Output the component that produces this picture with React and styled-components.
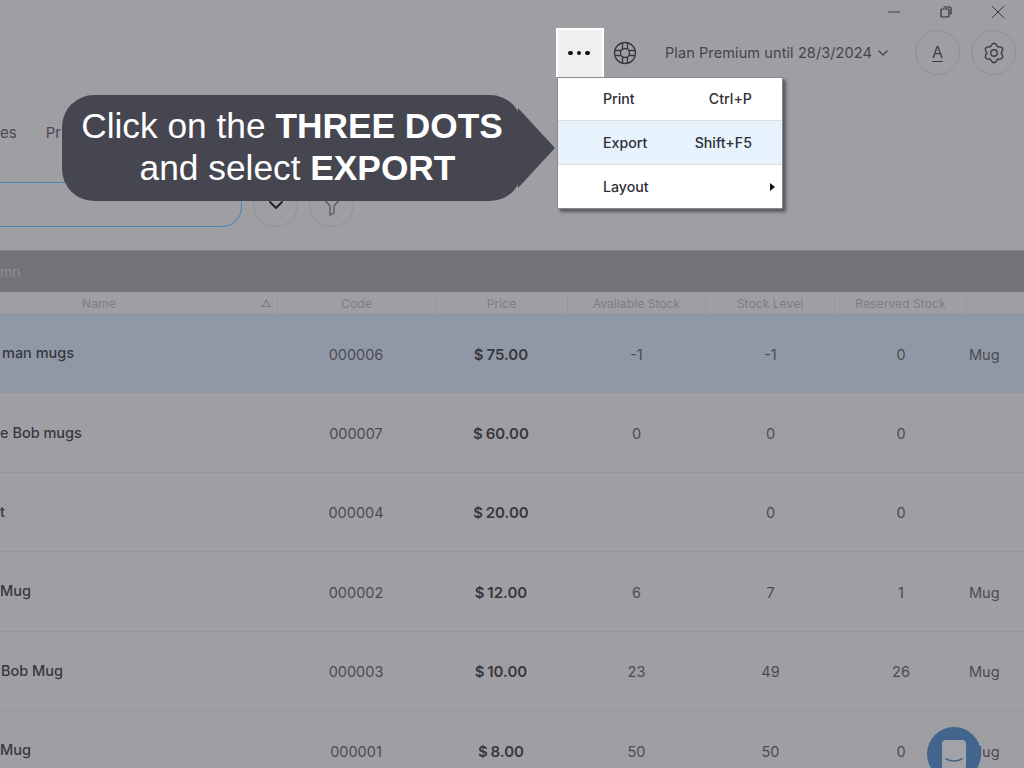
import React from "react";
import styled, { createGlobalStyle } from "styled-components";
import { ChevronDown, X, Minus } from "lucide-react";

const GlobalStyle = createGlobalStyle`
  html, body {
    margin: 0;
    height: 100%;
    overflow: hidden;
    background: #9f9ea3;
  }
  * {
    box-sizing: border-box;
  }
`;

const Page = styled.div`
  position: relative;
  width: 1024px;
  height: 768px;
  overflow: hidden;
  display: flex;
  flex-direction: column;
  background: #9f9ea3;
  color: #3f3e45;
  font-family: Inter, "Liberation Sans", sans-serif;
  font-size: 14px;
`;

const TitleBar = styled.div`
  height: 28px;
  flex: none;
  display: flex;
  justify-content: flex-end;
`;

const WindowButton = styled.div`
  width: 52px;
  height: 24px;
  display: flex;
  align-items: center;
  justify-content: center;
  color: #2f2e34;
`;

const Toolbar = styled.div`
  height: 49px;
  flex: none;
  display: flex;
  align-items: center;
  justify-content: flex-end;
  padding-right: 8px;
`;

const DotsWrap = styled.div`
  position: relative;
  width: 48px;
  height: 49px;
  margin-right: 9px;
`;

const DotsButton = styled.div`
  width: 48px;
  height: 49px;
  display: flex;
  align-items: center;
  justify-content: center;
  gap: 4px;
  padding-bottom: 1px;
  padding-right: 2px;
  background: #efefef;
  border: 2px solid #fff;
  border-bottom: 0;
`;

const Dot = styled.span`
  width: 4.5px;
  height: 4.5px;
  border-radius: 50%;
  background: #111;
`;

const Menu = styled.div`
  position: absolute;
  top: 49px;
  left: 1px;
  width: 226px;
  display: flex;
  flex-direction: column;
  background: #fff;
  border: 1px solid #8a898e;
  box-shadow: 3px 3px 3px rgba(40, 40, 48, 0.6);
  z-index: 3;
`;

const MenuItem = styled.div`
  height: ${(p) => (p.$first ? 42 : 44)}px;
  display: flex;
  align-items: center;
  justify-content: space-between;
  padding: 0 30px ${(p) => (p.$first ? 2 : 0)}px 45px;
  background: ${(p) => (p.$active ? "#e6f3fd" : "#fff")};
  border-top: ${(p) => (p.$first ? "0" : "1px solid #dddddd")};
  color: #2f2f36;
  font-size: 14.2px;
  font-weight: 500;
`;

const SubArrow = styled.span`
  width: 0;
  height: 0;
  margin-right: -23px;
  border-left: 5px solid #111;
  border-top: 4px solid transparent;
  border-bottom: 4px solid transparent;
`;

const HelpIcon = styled.div`
  width: 24px;
  height: 24px;
  margin-right: 28px;
  color: #38373d;
`;

const Plan = styled.div`
  display: flex;
  align-items: center;
  gap: 3px;
  margin-right: 24px;
  font-size: 14.5px;
  letter-spacing: 0.1px;
  color: #46454c;
`;

const CircleButton = styled.div`
  width: 45px;
  height: 45px;
  flex: none;
  display: flex;
  align-items: center;
  justify-content: center;
  border: 1px solid #918f95;
  border-radius: 50%;
  margin-left: ${(p) => p.$gap || 0}px;
  color: ${(p) => p.$color || "#3f3e45"};
`;

const LetterA = styled.span`
  font-size: 16px;
  font-weight: 400;
  line-height: 17px;
  border-bottom: 1.5px solid #3f3e45;
`;

const Tabs = styled.div`
  height: 105px;
  flex: none;
  display: flex;
  align-items: flex-start;
  gap: 29px;
  padding-top: 46px;
  font-size: 15px;
  color: #4a4950;
`;

const FilterRow = styled.div`
  height: 45px;
  flex: none;
  display: flex;
  gap: 11px;
`;

const SearchBox = styled.div`
  width: 242px;
  height: 45px;
  border: 1.5px solid #4b87b5;
  border-left: 0;
  border-radius: 0 20px 20px 0;
`;

const GroupBar = styled.div`
  height: 42px;
  flex: none;
  margin-top: 23px;
  display: flex;
  align-items: center;
  background: #727277;
  color: #8f8f94;
  font-size: 14px;
  border-top: 1px solid #87868b;
`;

const Table = styled.div`
  width: 1103px;
  margin-left: -79px;
  flex: none;
`;

const HeaderRow = styled.div`
  display: grid;
  grid-template-columns: 357px 158px 132px 138px 129px 132px 57px;
  height: 22px;
  border-bottom: 1px solid #97969b;
`;

const HeaderCell = styled.div`
  position: relative;
  display: flex;
  align-items: center;
  justify-content: center;
  padding-top: 2px;
  font-size: 12.2px;
  color: #7e7d83;
  border-right: ${(p) => (p.$last ? "0" : "1px solid #97969b")};
`;

const SortMark = styled.span`
  position: absolute;
  right: 6px;
  top: 5px;
  font-size: 10px;
  line-height: 12px;
  color: #77767c;
`;

const Row = styled.div`
  display: grid;
  grid-template-columns: 356px 158px 132px 139px 129px 132px 57px;
  height: 79.4px;
  padding-top: 2px;
  align-items: center;
  background: ${(p) => (p.$selected ? "#9098a5" : "transparent")};
  border-bottom: 1px solid ${(p) => (p.$selected ? "#9098a5" : "#97969b")};
`;

const NameCell = styled.div`
  font-weight: 500;
  font-size: 14.5px;
  color: #38373e;
  margin-top: -3px;
  white-space: nowrap;
  padding-left: ${(p) => p.$pad}px;
`;

const Cell = styled.div`
  text-align: center;
  color: #4c4b52;
  font-size: 14.5px;
`;

const PriceCell = styled(Cell)`
  font-weight: 600;
  color: #38373e;
  font-size: 15px;
  word-spacing: -1px;
`;

const TypeCell = styled.div`
  padding-left: 2px;
  color: #4c4b52;
  font-size: 14.5px;
`;

const Callout = styled.div`
  position: absolute;
  left: 62px;
  top: 95px;
  width: 460px;
  height: 106px;
  padding-bottom: 2px;
  display: flex;
  flex-direction: column;
  align-items: center;
  justify-content: center;
  background: #464650;
  border-radius: 32px;
  color: #fff;
  font-family: "Liberation Sans", Arial, sans-serif;
  font-size: 35.3px;
  line-height: 42px;
  white-space: nowrap;
  z-index: 2;

  &::after {
    content: "";
    position: absolute;
    left: 456px;
    top: 13px;
    width: 37px;
    height: 80px;
    background: #464650;
    clip-path: polygon(0 0, 100% 50%, 0 100%);
  }
`;

const CalloutLine = styled.div`
  margin-left: ${(p) => p.$shift || 0}px;
`;

const ChatBubble = styled.div`
  position: absolute;
  left: 927px;
  top: 727px;
  width: 54px;
  height: 54px;
  display: flex;
  justify-content: center;
  padding-top: 13px;
  border-radius: 50%;
  background: #41658c;
  z-index: 2;
`;

const rows = [
  { name: "man mugs", pad: 81, code: "000006", price: "$ 75.00", a: "-1", l: "-1", r: "0", t: "Mug", selected: true },
  { name: "e Bob mugs", pad: 79, code: "000007", price: "$ 60.00", a: "0", l: "0", r: "0", t: "" },
  { name: "t", pad: 79, code: "000004", price: "$ 20.00", a: "", l: "0", r: "0", t: "" },
  { name: "Mug", pad: 79, code: "000002", price: "$ 12.00", a: "6", l: "7", r: "1", t: "Mug" },
  { name: "Bob Mug", pad: 80, code: "000003", price: "$ 10.00", a: "23", l: "49", r: "26", t: "Mug" },
  { name: "Mug", pad: 79, code: "000001", price: "$ 8.00", a: "50", l: "50", r: "0", t: "Mug" },
];

const columns = ["Name", "Code", "Price", "Available Stock", "Stock Level", "Reserved Stock", ""];

const App = () => {
  return (
    <>
      <GlobalStyle />
      <Page>
        <TitleBar>
          <WindowButton>
            <Minus size={20} strokeWidth={1} />
          </WindowButton>
          <WindowButton>
            <svg width="14" height="14" viewBox="0 0 14 14" fill="none" stroke="currentColor" strokeWidth="1.2">
              <rect x="2" y="4" width="8" height="8" rx="1" />
              <path d="M4.5 2h6a1.5 1.5 0 0 1 1.5 1.5v6" />
            </svg>
          </WindowButton>
          <WindowButton>
            <X size={24} strokeWidth={0.9} />
          </WindowButton>
        </TitleBar>

        <Toolbar>
          <DotsWrap>
            <DotsButton>
              <Dot />
              <Dot />
              <Dot />
            </DotsButton>
            <Menu>
              <MenuItem $first>
                <span>Print</span>
                <span>Ctrl+P</span>
              </MenuItem>
              <MenuItem $active>
                <span>Export</span>
                <span>Shift+F5</span>
              </MenuItem>
              <MenuItem>
                <span>Layout</span>
                <SubArrow />
              </MenuItem>
            </Menu>
          </DotsWrap>
          <HelpIcon>
            <svg width="24" height="24" viewBox="0 0 24 24" fill="none" stroke="currentColor" strokeWidth="1.3">
              <circle cx="12" cy="12" r="10.5" />
              <circle cx="12" cy="12" r="4.5" />
              <path d="M9.5 2v6M14.5 2v6M9.5 16v6M14.5 16v6M2 9.5h6M2 14.5h6M16 9.5h6M16 14.5h6" />
            </svg>
          </HelpIcon>
          <Plan>
            Plan Premium until 28/3/2024
            <ChevronDown size={16} strokeWidth={1.9} />
          </Plan>
          <CircleButton>
            <LetterA>A</LetterA>
          </CircleButton>
          <CircleButton $gap={11}>
            <svg width="22" height="22" viewBox="0 0 24 24" fill="none" stroke="currentColor" strokeWidth="1.5" strokeLinejoin="round">
              <path d="M8.1 5.25Q12 -2.5 15.9 5.25Q24.56 4.75 19.8 12Q24.56 19.25 15.9 18.75Q12 26.5 8.1 18.75Q-.56 19.25 4.2 12Q-.56 4.75 8.1 5.25Z" />
              <circle cx="12" cy="12" r="3.5" />
            </svg>
          </CircleButton>
        </Toolbar>

        <Tabs>
          <span>es</span>
          <span>Pr</span>
        </Tabs>

        <FilterRow>
          <SearchBox />
          <CircleButton $color="#222">
            <ChevronDown size={24} strokeWidth={1.9} />
          </CircleButton>
          <CircleButton $color="#55545a">
            <svg width="24" height="24" viewBox="0 0 24 24" fill="none" stroke="currentColor" strokeWidth="1.2">
              <path d="M3 5h18l-7 8v7l-4 2v-9z" />
            </svg>
          </CircleButton>
        </FilterRow>

        <GroupBar>mn</GroupBar>

        <Table>
          <HeaderRow>
            {columns.map((col, i) => (
              <HeaderCell key={col || i} $last={i === columns.length - 1}>
                {col}
                {i === 0 && <SortMark>△</SortMark>}
              </HeaderCell>
            ))}
          </HeaderRow>
          {rows.map((row) => (
            <Row key={row.code} $selected={row.selected}>
              <NameCell $pad={row.pad}>{row.name}</NameCell>
              <Cell>{row.code}</Cell>
              <PriceCell>{row.price}</PriceCell>
              <Cell>{row.a}</Cell>
              <Cell>{row.l}</Cell>
              <Cell>{row.r}</Cell>
              <TypeCell>{row.t}</TypeCell>
            </Row>
          ))}
        </Table>

        <Callout>
          <CalloutLine>
            Click on the <b>THREE DOTS</b>
          </CalloutLine>
          <CalloutLine $shift={11}>
            and select <b>EXPORT</b>
          </CalloutLine>
        </Callout>

        <ChatBubble>
          <svg width="26" height="30" viewBox="0 0 26 30">
            <rect x="1" y="0" width="24" height="30" rx="4" fill="#a2a3a8" />
            <path d="M5 19q8 4 16 0" fill="none" stroke="#41658c" strokeWidth="1.6" strokeLinecap="round" />
          </svg>
        </ChatBubble>
      </Page>
    </>
  );
};

export default App;
